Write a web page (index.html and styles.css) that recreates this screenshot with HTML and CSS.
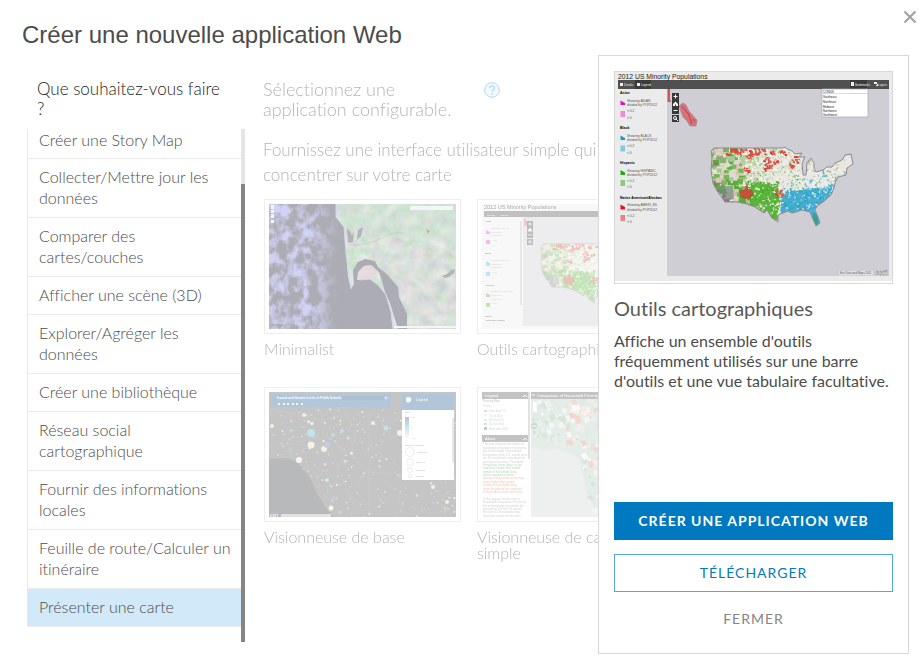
FILE: index.html
```html
<!DOCTYPE html>
<html lang="fr">
<head>
<meta charset="utf-8">
<title>Créer une nouvelle application Web</title>
<link rel="stylesheet" href="styles.css">
</head>
<body>
<div class="dialog" role="dialog" aria-labelledby="dialog-title">
  <header class="dialog-header">
    <h1 id="dialog-title">Créer une nouvelle application Web</h1>
    <button class="close" type="button" aria-label="Fermer la fenêtre">
      <svg viewBox="0 0 14 14" width="14" height="14"><path d="M1.500 1.500 12.500 12.500M12.500 1.500 1.500 12.500" stroke="#a3a3a3" stroke-width="2.2" fill="none"/></svg>
    </button>
  </header>

  <div class="columns">
    <nav class="sidebar" aria-labelledby="nav-title">
      <h2 id="nav-title">Que souhaitez-vous faire<br>?</h2>
      <div class="scroller">
        <ul class="choices">
          <li><button type="button">Créer une Story Map</button></li>
          <li><button type="button">Collecter/Mettre jour les<br>données</button></li>
          <li><button type="button">Comparer des<br>cartes/couches</button></li>
          <li><button type="button">Afficher une scène (3D)</button></li>
          <li><button type="button">Explorer/Agréger les<br>données</button></li>
          <li><button type="button">Créer une bibliothèque</button></li>
          <li><button type="button">Réseau social<br>cartographique</button></li>
          <li><button type="button">Fournir des informations<br>locales</button></li>
          <li><button type="button">Feuille de route/Calculer un<br>itinéraire</button></li>
          <li class="selected"><button type="button">Présenter une carte</button></li>
        </ul>
        <div class="scroll-track"><div class="scroll-thumb"></div></div>
      </div>
    </nav>

    <main class="gallery">
      <div class="gallery-head">
        <h2>Sélectionnez une application configurable.</h2>
        <svg class="help" viewBox="0 0 16 16" width="16" height="16"><circle cx="8" cy="8" r="7.3" fill="#e3f3ff" stroke="#1f8fe5"/><path d="M5.7 6.3C5.7 3 10.5 3.100 10.500 5.800C10.500 7.700 8.100 7.700 8.100 9.800" fill="none" stroke="#1f8fe5" stroke-width="1.300"/><circle cx="8.100" cy="11.900" r=".9" fill="#1f8fe5"/></svg>
      </div>
      <p class="intro">Fournissez une interface utilisateur simple qui permet de se<br>concentrer sur votre carte</p>

      <div class="cards">
        <button class="card" type="button">
          <span class="frame">
            <svg viewBox="0 0 187 125">
              <defs>
                <filter id="clouds" x="0" y="0" width="100%" height="100%" color-interpolation-filters="sRGB"><feTurbulence type="fractalNoise" baseFrequency=".1 .08" numOctaves="4" seed="8"/><feColorMatrix values="0 0 0 0 .5  0 0 0 0 .5  0 0 0 0 .9  3.500 0 0 0 -1.350"/></filter>
                <filter id="terrain" x="0" y="0" width="100%" height="100%" color-interpolation-filters="sRGB"><feTurbulence type="fractalNoise" baseFrequency=".09" numOctaves="5" seed="3"/><feColorMatrix values=".7 0 0 0 .24  .2 .4 0 0 .38  .45 0 .3 0 .22  0 0 0 0 1"/></filter>
                <linearGradient id="cloud-fade"><stop offset=".6" stop-color="#fff"/><stop offset="1" stop-color="#000"/></linearGradient>
                <mask id="cloud-mask"><path d="M0 0H70V125H0Z" fill="url(#cloud-fade)"/></mask>
                <clipPath id="land"><path clip-rule="evenodd" d="M67 0V13L75 23 77 49 79 73 82 85 85 80 84 66 89 58 96 55 106 57 109 63 119 71 129 83 130 93 138 110 138 125H187V0Z"/><path d="M88 76 89 68 95 62 102 61 110 68 113 77 116 88 121 99 125 112 129 125H124L122 108 117 91 109 81 101 75Z"/></clipPath>
              </defs>
              <path fill="#15152a" d="M0 0H187V125H0Z"/>
              <g mask="url(#cloud-mask)"><path filter="url(#clouds)" d="M0 0H70V125H0Z"/></g>
              <g clip-path="url(#land)"><path filter="url(#terrain)" d="M60 0H187V125H60Z"/><path d="M67 0H187V40L120 30 82 42Z" fill="#57b073" opacity=".3"/><path d="M110 60 150 40 187 60V125H138Z" fill="#8e739a" opacity=".15"/><path d="M88 65 96 60 104 61 107 72 104 76 91 76Z" fill="#c98ba5" opacity=".7"/></g>
              <path d="M67 0V13L75 23 77 49 82 85M91 76 101 75 109 81 117 91 122 108 124 125" fill="none" stroke="#7f93d8" stroke-width="1"/>
              <path d="M78 25 81 27 83 32 85 27 84 38 79 39ZM89 26 94 23 92 32 88 36ZM173 72 178 70 182 66 186 65 185 69 180 73 176 74ZM157 25 161 27 159 30Z" fill="#27253d"/><path d="M78 41Q98 42 113 34T138 30" fill="none" stroke="#5c586f" stroke-width=".6"/>
              <path d="M141 2H184V6H141ZM125 122H187V124H125ZM2 1H5V5H2ZM2 6H5V9H2ZM2 10H5V14H2ZM2 16H5V19H2Z" fill="#e1e3e7"/><path d="M4 119H17" stroke="#ddd" stroke-width=".7"/>
            </svg>
          </span>
          <span class="label">Minimalist</span>
        </button>

        <button class="card" type="button">
          <span class="frame">
            <svg viewBox="0 0 187 125" class="tiny-map">
              <path fill="#ececec" d="M0 0H187V125H0Z"/><path fill="#ceced4" d="M41 13H187V122H41Z"/><path fill="#4d4d4d" d="M2 7H187V13H2Z"/>
              <text x="2" y="5" font-size="5.500">2012 US Minority Populations</text>
              <g font-size="2.500" fill="#fff"><text x="5" y="11.500">Details</text><text x="18" y="11.500">Legend</text></g>
              <g font-size="2.300" font-weight="700"><text x="3" y="18">Asian</text><text x="3" y="50">Black</text><text x="3" y="82">Hispanic</text><text x="3" y="113">Native</text><text x="3" y="117">American/Alaskan</text></g>
              <g font-size="2.500" fill="#777"><text x="9" y="25">Showing ASIAN</text><text x="9" y="28.500">divided by</text><text x="9" y="32">POP2012</text><text x="9" y="37">&lt; 0.2</text><text x="9" y="42">&lt; 0</text><text x="9" y="57">Showing BLACK</text><text x="9" y="60.500">divided by</text><text x="9" y="64">POP2012</text><text x="9" y="68.500">&lt; 0.2</text><text x="9" y="74">&lt; 0</text><text x="9" y="88">Showing HISPANIC</text><text x="9" y="92">divided by</text><text x="9" y="95.500">POP2012</text><text x="9" y="100">&lt; 0.2</text><text x="9" y="105">&lt; 0</text></g>
              <path d="M4 26 8 28V30H4ZM4 36H8V40H4Z" fill="#ed41c2"/><path d="M4 57 8 59V62H4ZM4 68H8V72H4Z" fill="#45b5dd"/><path d="M4 89 8 91V93H4ZM4 99H8V103H4Z" fill="#55ad3e"/>
              <path d="M38 17H40V101H38Z" fill="#bbb"/><path d="M42 14 50 22H42Z" fill="#d76670"/><path d="M45 17H51V34H45ZM45 35H51V41H45Z" fill="#444"/><path d="M46 20H50M48 18V22M46 31H50M46 27 48 24 50 27Z" stroke="#fff" fill="#fff" stroke-width=".7"/><circle cx="48" cy="38" r="1.300" fill="none" stroke="#fff" stroke-width=".7"/>
              <g transform="translate(-18 -21) scale(.8)" data-draw="usa"></g>
            </svg>
          </span>
          <span class="label">Outils cartographiques</span>
        </button>

        <button class="card" type="button">
          <span class="frame">
            <svg viewBox="0 0 187 125" class="tiny-map">
              <path fill="#5b5b5b" d="M0 0H187V125H0Z"/><path d="M0 67 18 66 28 70 40 84 49 103 57 116 65 125H0Z" fill="#373a3b"/>
              <path d="M0 16 50 28 90 20 187 42M0 55 60 45 100 80 187 85M75 0 85 65 130 125M45 0 70 80 90 125M100 20V125M130 60 187 118" fill="none" stroke="#6d6d6d" stroke-width=".7"/>
              <g data-draw="schools"></g>
              <path d="M2 2H122V15H2ZM133 2H185V18H133Z" fill="#225f95"/><path d="M73 4H118V8H73Z" fill="#194a74"/>
              <text x="8" y="7" font-size="3" font-weight="700" fill="#fff">Income and Vaccine Levels in Public Schools</text>
              <path d="M9 11H11V13H9ZM14 11H16V13H14ZM18 11H20V13H18ZM23 11H25V13H23ZM27 11H29V13H27ZM32 11H34V13H32Z" fill="#e7eff6"/><circle cx="117" cy="6" r="1.200" fill="none" stroke="#fff" stroke-width=".6"/><path d="M137 6 139 5 142 6V9L139 11 137 9Z" fill="#fff"/><text x="147" y="9" font-size="3.500" fill="#fff">Legend</text>
              <path d="M133 18H185V88H133Z" fill="#fff"/><defs><linearGradient id="legend-scale" x2="0" y2="1"><stop stop-color="#3b4ea6"/><stop offset=".5" stop-color="#56c3c6"/><stop offset="1" stop-color="#faf8cd"/></linearGradient></defs><path d="M136 25H140V46H136Z" fill="url(#legend-scale)"/>
              <g font-size="2.500"><text x="136" y="21">Title</text><text x="142" y="26">&gt; 5</text><text x="142" y="36">0</text><text x="142" y="47">&lt; 5</text><text x="136" y="54">Number enrolled</text><text x="147" y="61">&gt; 500,000</text><text x="147" y="71">250,000</text><text x="147" y="79">100,000</text><text x="147" y="85">50,000</text></g><g fill="none" stroke="#999" stroke-width=".5"><circle cx="141" cy="60" r="4.500"/><circle cx="141" cy="70" r="3.500"/><circle cx="141" cy="78" r="2.500"/><circle cx="141" cy="84" r="1.700"/></g><path d="M183 26H185V70H183Z" fill="#bbb"/>
              <path d="M12 122H62V125H12Z" fill="#aaa"/><text x="1" y="124.500" font-size="5" fill="#fff">esri</text>
            </svg>
          </span>
          <span class="label">Visionneuse de base</span>
        </button>

        <button class="card" type="button">
          <span class="frame">
            <svg viewBox="0 0 187 125" class="tiny-map">
              <path fill="#fff" d="M0 0H187V125H0Z"/><path fill="#d1d2d2" d="M49 6H187V125H49Z"/>
              <path d="M49 6H187V125H120L106 107 102 88 97 66 78 57 62 59 49 54Z" fill="#b5cdbf"/>
              <g data-draw="poverty"></g>
              <path d="M0 0H46V7H0ZM0 43H46V50H0ZM49 0H187V7H49Z" fill="#575757"/><path d="M46 0H48V67H46Z" fill="#aaa"/>
              <g fill="#fff" font-size="4"><text x="3" y="5">Legend</text><text x="3" y="48">About</text><text x="55" y="5">Comparison of Household Poverty</text></g><path d="M41 5 43 3 45 5M41 48 43 46 45 48M50 3H53" fill="none" stroke="#fff"/>
              <g font-size="2.800" fill="#777"><text x="1" y="10" font-weight="700">Poverty Rate</text><text x="1" y="15">Tracts</text><text x="7" y="20">Less than 7.5</text><text x="7" y="24.500">7.5 to 10.0</text><text x="7" y="29">10.0 to 20.0</text><text x="7" y="33">20.0 to 30.0</text><text x="7" y="37.500">More than 30.0</text></g>
              <path d="M2 18H5V20H2Z" fill="#df8968"/><path d="M2 22H5V24H2Z" fill="#ddd"/><path d="M2 27H5V29H2Z" fill="#a8c6b4"/><path d="M2 31H5V33H2Z" fill="#71a98c"/><path d="M2 35H5V38H2Z" fill="#377d67"/>
              <g font-size="2.700" fill="#777"><text x="1" y="53">This map compares the number of</text><text x="1" y="56.500">households living above the poverty</text><text x="1" y="60">line to the number of households</text><text x="1" y="63.500">living below. In the U.S. overall, there</text><text x="1" y="67">are 6.2 households living above the</text><text x="1" y="70.500">poverty line for every 1 household</text></g>
              <g font-size="2.700" fill="#168b37"><text x="1" y="74">living below. Green areas on the</text><text x="1" y="77.300">map have a higher than normal</text><text x="1" y="80.600">number of households living</text><text x="1" y="84">above compared to below</text></g><g font-size="2.700" fill="#db4e1d"><text x="1" y="87.300">poverty. Orange areas on the map</text><text x="1" y="90.700">have a higher than normal</text><text x="1" y="94">number of households living</text><text x="1" y="97.500">below the poverty line compared</text><text x="1" y="101">to those above in that same area.</text></g>
              <g font-size="2.700" fill="#777"><text x="1" y="108">In this map you see the ratio of</text><text x="1" y="111.400">households living above the poverty</text><text x="1" y="114.800">line to households living below the</text><text x="1" y="118">poverty line. For the U.S. overall,</text><text x="1" y="121.300">there are 6.2 households living</text><text x="1" y="124.500">above the poverty line for every</text></g>
              <path d="M51 10H55V20H51Z" fill="#fff"/><circle cx="52" cy="34" r="3" fill="#888"/><path d="M50 34H54" stroke="#fff"/>
            </svg>
          </span>
          <span class="label">Visionneuse de carte<br>simple</span>
        </button>
      </div>
    </main>
  </div>

  <aside class="details" aria-labelledby="details-title">
    <div class="preview">
      <svg viewBox="0 0 277 209" class="tiny-map">
        <path fill="#ebebeb" d="M0 0H277V209H0Z"/><path fill="#ceced4" d="M52 17H274V204H52Z"/><path fill="#505050" d="M3 8H274V17H3Z"/><path d="M20 8H36V17H20ZM235 8H252V17H235Z" fill="#3b3b3b"/>
        <text x="3" y="6.500" font-size="6.800" fill="#222">2012 US Minority Populations</text>
        <g font-size="3" fill="#eee"><text x="9" y="14">Details</text><text x="26" y="14">Legend</text><text x="240" y="14">Bookmarks</text><text x="263" y="14">Layers</text></g><path d="M5 11H8V14H5ZM22 11H25V14H22ZM236 10H239V14H236ZM259 10H262V13H261V14H263V12H259Z" fill="#eee"/>
        <g font-size="3.500" font-weight="700"><text x="5" y="22">Asian</text><text x="5" y="57">Black</text><text x="5" y="92">Hispanic</text><text x="5" y="126.500">Native American/Alaskan</text></g>
        <g font-size="3.300" fill="#555"><text x="12" y="30">Showing ASIAN</text><text x="12" y="34.300">divided by POP2012</text><text x="12" y="40">&lt; 0.2</text><text x="12" y="46.500">&lt; 0</text><text x="12" y="64.700">Showing BLACK</text><text x="12" y="69">divided by POP2012</text><text x="12" y="75">&lt; 0.2</text><text x="12" y="81.500">&lt; 0</text><text x="12" y="99.500">Showing HISPANIC</text><text x="12" y="104">divided by POP2012</text><text x="12" y="110">&lt; 0.2</text><text x="12" y="116">&lt; 0</text><text x="12" y="134">Showing AMERI_ES</text><text x="12" y="138.500">divided by POP2012</text><text x="12" y="144.500">&lt; 0.2</text><text x="12" y="151">&lt; 0</text></g>
        <g><path d="M5.500 28.500 10 31V33H5.500Z" fill="#df14b3"/><path d="M5.500 39H10V45H5.500Z" fill="#ee8cd3"/><path d="M5.500 63.500 10 66V68H5.500Z" fill="#179bd0"/><path d="M5.500 73.500H10V79.500H5.500Z" fill="#83c9e5"/><path d="M5.500 98 10 100.500V103H5.500Z" fill="#2da719"/><path d="M5.500 108H10V114H5.500Z" fill="#8bca7c"/><path d="M5.500 132.500 10 135V137.500H5.500Z" fill="#da1717"/><path d="M5.500 143H10V149H5.500Z" fill="#e98383"/></g>
        <path d="M52.500 17H55V27L56 30H52.500Z" fill="#d6535b"/><path d="M64 34 68 31 71 33 74 39 80 46 82 48 81 54 75 54 72 49 68 45Z" fill="#d9717b" stroke="#998a98" stroke-width=".7"/><path d="M67 34 74 43M73 41 77 52M78 47 80 50" stroke="#c04040" fill="none"/>
        <path d="M57 21H64V42H57ZM57 43H64V50H57Z" fill="#383838"/><path d="M58.500 24.500H62.500M60.500 22.500V26.500M58.500 38.500H62.500" stroke="#fff"/><path d="M58 32 60.500 29.500 63 32V34H61V32.500H60V34H58Z" fill="#fff"/><circle cx="60" cy="46" r="1.500" stroke="#fff" fill="none"/><path d="M61 47 63 49" stroke="#fff"/>
        <g data-draw="usa"></g>
        <path d="M207 17H253V45H207Z" fill="#fff" stroke="#aaa" stroke-width=".7"/><path d="M207 21.500H253" stroke="#b7c7dc" stroke-width=".6"/><g font-size="3" fill="#222"><text x="208" y="20.500">CONUS</text><text x="208" y="26">Southeast</text><text x="208" y="30.700">Northeast</text><text x="208" y="35.500">Midwest</text><text x="208" y="40">Northwest</text><text x="208" y="44.300">Southwest</text></g>
        <path d="M224 199H258V203H224Z" fill="#e2e2e5"/><text x="225" y="202" font-size="2.800" fill="#555">Esri Data and Maps 2011</text><text x="260" y="202.500" font-size="7" font-weight="700" fill="#f4f4f4" stroke="#777" stroke-width=".3">esri</text>
      </svg>
    </div>
    <h2 id="details-title">Outils cartographiques</h2>
    <p>Affiche un ensemble d'outils fréquemment utilisés sur une barre d'outils et une vue tabulaire facultative.</p>
    <div class="actions">
      <button class="btn primary" type="button">Créer une application Web</button>
      <button class="btn outline" type="button">Télécharger</button>
      <button class="btn plain" type="button">Fermer</button>
    </div>
  </aside>
</div>
<script src="maps.js"></script>
</body>
</html>
```

FILE: styles.css
```css
* { box-sizing: border-box; }

body {
  margin: 0;
  background: #fff;
  color: #4c4c4c;
  font-family: Lato, "Open Sans", sans-serif;
  font-size: 16px;
  font-variant-ligatures: none;
}

h1, h2, p, ul { margin: 0; padding: 0; font-weight: 400; }

button {
  margin: 0;
  padding: 0;
  border: 0;
  background: none;
  color: inherit;
  font: inherit;
  font-variant-ligatures: none;
  text-align: left;
  cursor: pointer;
}

svg { display: block; }

.dialog {
  position: relative;
  min-height: 100vh;
  overflow: hidden;
}

.dialog-header {
  display: flex;
  justify-content: space-between;
  padding: 10px 6px 0 22px;
}

h1 {
  padding-top: 11px;
  font: 24px/28px "Liberation Sans", Arial, sans-serif;
}

.close { align-self: flex-start; }

.columns {
  display: flex;
  gap: 18px;
  padding: 30px 14px 0 27px;
}

.sidebar { flex: none; width: 218px; }

.sidebar h2 {
  padding-left: 10px;
  font-size: 17px;
  font-weight: 300;
  line-height: 20px;
  color: #222;
}

.scroller { display: flex; height: 513px; margin-top: 10px; }

.choices {
  flex: 1;
  align-self: flex-start;
  list-style: none;
  border-left: 1px solid #e8e8e8;
  color: #4c4c4c;
  font-weight: 300;
}

.choices li { border-bottom: 1px solid #ebebeb; }

.choices button {
  width: 100%;
  padding: 7px 0 9px 11px;
  line-height: 21px;
}

.choices li:first-child button { padding-top: 0; padding-bottom: 8px; }

.choices .selected { background: #d2e9f9; }

.scroll-track { width: 4px; padding-top: 55px; background: #e5e5e5; }

.scroll-thumb { height: 100%; background: #858585; }

.gallery { flex: 1; min-width: 0; font-weight: 300; opacity: .35; }

.gallery-head { display: flex; gap: 21px; }

.gallery-head h2 {
  width: 200px;
  font-size: 18px;
  font-weight: 300;
  line-height: 20px;
  color: #222;
}

.help { margin-top: 3px; }

.intro {
  margin-top: 18px;
  font-size: 17px;
  font-weight: 300;
  line-height: 25px;
  color: #222;
  white-space: nowrap;
}

.cards {
  display: grid;
  grid-template-columns: repeat(2, 197px);
  gap: 25px 16px;
  margin-top: 12px;
  padding-left: 1px;
}

.card { display: flex; flex-direction: column; min-height: 163px; }

.frame {
  display: block;
  width: 100%;
  padding: 4px;
  border: 1px solid #d0d0d0;
}

.label {
  margin-top: 7px;
  color: #222;
  line-height: 16px;
  white-space: nowrap;
}

.tiny-map { font-family: "Liberation Sans", Arial, sans-serif; font-weight: 400; }

.details {
  position: absolute;
  top: 55px;
  right: 14px;
  bottom: 11px;
  display: flex;
  flex-direction: column;
  width: 311px;
  padding: 15px;
  border: 1px solid #d8d8d8;
  background: #fff;
}

.preview { padding-bottom: 2px; border: 1px solid #d8d8d8; }

.details h2 {
  margin-top: 12px;
  color: #595959;
  font-size: 20px;
  line-height: 24px;
}

.details p { margin-top: 11px; line-height: 20px; }

.actions {
  display: flex;
  flex-direction: column;
  gap: 14px;
  margin-top: auto;
}

.btn {
  height: 38px;
  padding-bottom: 2px;
  color: #007ac2;
  font-size: 14px;
  letter-spacing: 1px;
  text-align: center;
  text-transform: uppercase;
}

.primary { background: #0079c1; color: #fff; font-weight: 700; }

.outline { border: 1px solid #56a9dc; }

.plain { margin-top: -6px; color: #858585; }
```

FILE: maps.js
```javascript
// Draws the repeated map marks of the previews from a seeded sequence.
const NS = "http://www.w3.org/2000/svg";
let seed = 7;
const random = () => {
  seed = (seed * 16807) % 2147483647;
  return seed / 2147483647;
};
const pick = (list) => list[Math.floor(random() * list.length)];
const add = (parent, name, attributes) => {
  const element = document.createElementNS(NS, name);
  for (const key in attributes) element.setAttribute(key, attributes[key]);
  parent.appendChild(element);
  return element;
};

const outline = "M96 79 99 76H168L170 75 172 77 177 79 180 82 187 81 184 85 190 85 187 91 188 103 191 103 192 91 196 86 199 91 199 96 201 100 208 98 212 95 217 95 220 91 227 88 230 83 236 82 238 92 232 96 231 103 223 105 220 111 219 116 216 123 208 130 202 134 200 138 203 145 205 151 201 154 197 145 195 140 187 138 181 140 177 141 173 139 163 143 163 150 157 146 152 138 149 141 140 135 132 132 122 130 110 130 105 123 101 117 98 111 96 98 97 85Z";

function usa(group, index) {
  seed = 7;
  const id = "usa-outline-" + index;
  add(add(group, "clipPath", { id }), "path", { d: outline });
  add(group, "path", { d: outline, fill: "#e9e5df" });
  const land = add(group, "g", { "clip-path": "url(#" + id + ")" });
  const west = ["#5dac3b", "#75b659", "#a5c894", "#ded9ca", "#dec5bb", "#8cad72"];
  for (let i = 0; i < 420; i++) {
    const x = 94 + random() * 48;
    const y = 75 + random() * 62;
    const size = 2 + random() * 5;
    const south = y > 106;
    const fill = south && random() < .6 ? pick(["#58a936", "#65b541"]) : x > 124 && y < 100 ? pick(["#f0ede8", "#e8dfd6", "#b8ce9d"]) : pick(west);
    add(land, "rect", { x, y, width: size, height: size * .8, fill });
  }
  add(land, "path", { d: "M136 113 150 109 164 116 166 129 160 151H149L135 134Z", fill: "#5bb53b" });
  add(land, "path", { d: "M166 124 180 119 200 117 219 112V132L202 157 195 140 166 145Z", fill: "#48afd5" });
  for (let i = 0; i < 2600; i++) {
    const x = 130 + random() * 105;
    const y = 76 + random() * 70;
    if (x > 222 && y < 98 && random() < .8) continue;
    const fill = y > 116 && x > 165 ? pick(["#249fd0", "#43acd7", "#43acd7", "#e6eeee", "#3faaa7"])
      : x < 163 && y > 109 ? pick(["#4aac2c", "#60b644", "#55b038", "#f2f1ea"])
      : pick(["#f6f4f0", "#f0e9e4", "#94c786", "#eceae2", "#f4f1ec", x > 175 && y > 98 ? "#5db4da" : "#c1d9b4"]);
    add(land, "rect", { x, y, width: .8 + random() * 1.4, height: .8 + random() * 1.4, fill });
  }
  const clusters = [[117, 77, 4], [121, 80, 6], [128, 77, 5], [133, 84, 5], [138, 78, 8], [146, 79, 6], [151, 87, 5], [153, 93, 6], [157, 80, 4], [167, 80, 5], [180, 87, 6], [131, 97, 4], [164, 121, 7], [160, 90, 4], [175, 93, 4], [192, 87, 3], [149, 97, 3], [112, 81, 2]];
  for (const [x, y, spread] of clusters) {
    for (let i = 0; i < spread * 2; i++) {
      add(land, "rect", { x: x + (random() - .5) * spread * 1.2, y: y + (random() - .5) * spread, width: 1 + random() * 1.8, height: 1 + random() * 1.500, fill: pick(["#dc4433", "#e0574a", "#d04a3a"]) });
    }
  }
  add(land, "path", { d: "M124 119 130 117 137 118 139 122 135 127 126 126Z", fill: "#8f6a2c" });
  add(land, "path", { d: "M124 122 129 119 132 112 134 119 138 121 134 123 133 128 130 125Z", fill: "#cf4d34" });
  add(land, "path", { d: "M103 115 118 113 119 127 109 129Z", fill: "#728b7d", opacity: .7 });
  for (const [x, y] of [[101, 92], [100, 113], [103, 119], [109, 124], [113, 129]]) {
    add(land, "circle", { cx: x, cy: y, r: 1.8, fill: "#a75aa5" });
  }
  add(land, "path", { d: "M198 139 204 146 202 156 198 148Z", fill: "#35a28c" });
  add(group, "path", { d: outline, fill: "none", stroke: "#8d8b94", "stroke-width": 1 });
}

function schools(group) {
  seed = 21;
  for (let i = 0; i < 430; i++) {
    const x = random() * 187;
    const y = 15 + random() * 110;
    if (y > 64 && x < 20 + (y - 60) * .8) continue;
    add(group, "circle", { cx: x, cy: y, r: .3 + random() * (random() > .85 ? 1.5 : .8), fill: pick(["#868886", "#9ba19e", "#d7d5b4", "#72a0a6", "#8a8a89"]) });
  }
  for (const [x, y, r, fill] of [[42, 41, 4, "#50b1be"], [42, 53, 3.5, "#e0deb7"], [55, 57, 3, "#ddd9b4"], [30, 68, 3, "#e9e5c0"], [58, 53, 3, "#6868ad"], [3, 34, 2, "#ded7aa"], [35, 23, 2, "#ded7aa"], [64, 43, 2, "#50a1af"], [73, 39, 2, "#50a1af"], [117, 36, 2.500, "#50b1be"], [131, 41, 3, "#ddd9b4"], [104, 31, 2, "#ddd9b4"], [37, 55, 2, "#5757a9"], [58, 88, 2, "#73c2bf"], [65, 106, 2, "#686aac"], [62, 116, 2.500, "#e6e1ae"], [178, 110, 2, "#ded7aa"], [164, 95, 2, "#ded7aa"]]) {
    add(group, "circle", { cx: x, cy: y, r, fill });
  }
}

function poverty(group) {
  seed = 35;
  for (let i = 0; i < 380; i++) {
    const x = 49 + random() * 90;
    const y = 7 + random() * 110;
    if (y > 52 - (x < 70 ? 5 : 0) && x < 96 + (y - 50) * .15) continue;
    const s = 1.500 + random() * 4;
    const fill = x > 82 && y < 76 && random() < .6 ? pick(["#e0a18c", "#eacabd", "#e88b6d", "#f3efec"]) : pick(["#8eb69e", "#a8c8b4", "#c2d7cb", "#dfe7e1"]);
    add(group, "path", { d: `M${x} ${y}l${s} -${s / 3} ${s / 2} ${s} -${s} ${s / 2}Z`, fill });
  }
}

const drawings = { usa, schools, poverty };
document.querySelectorAll("[data-draw]").forEach((group, index) => drawings[group.dataset.draw](group, index));
```
